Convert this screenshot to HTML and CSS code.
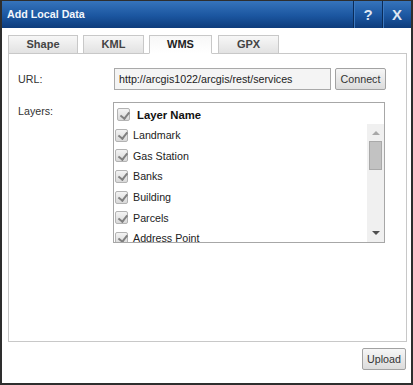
FILE: index.html
```html
<!DOCTYPE html>
<html lang="en">
<head>
    <meta charset="UTF-8">
    <title>Add Local Data</title>
    <link rel="stylesheet" href="styles.css">
</head>
<body>
    <div class="dialog">
        <div class="titlebar">
            <span class="title">Add Local Data</span>
            <span class="tb-btn">?</span>
            <span class="tb-btn">X</span>
        </div>

        <div class="dialog-body">
            <div class="tabs">
                <div class="tab tab-wide">Shape</div>
                <div class="tab">KML</div>
                <div class="tab tab-mid active">WMS</div>
                <div class="tab">GPX</div>
            </div>

            <div class="panel">
                <div class="field-row">
                    <label class="field-label">URL:</label>
                    <input class="url-input" type="text" value="http://arcgis1022/arcgis/rest/services">
                    <button class="btn connect-btn">Connect</button>
                </div>

                <div class="field-row layers-row">
                    <label class="field-label">Layers:</label>
                    <div class="layer-list">
                        <div class="layer-head"><span class="cb"></span>Layer Name</div>
                        <div class="layer-scroll">
                            <div class="layer-rows">
                                <div class="layer-row"><span class="cb"></span>Landmark</div>
                                <div class="layer-row"><span class="cb"></span>Gas Station</div>
                                <div class="layer-row"><span class="cb"></span>Banks</div>
                                <div class="layer-row"><span class="cb"></span>Building</div>
                                <div class="layer-row"><span class="cb"></span>Parcels</div>
                                <div class="layer-row"><span class="cb"></span>Address Point</div>
                            </div>
                            <div class="scrollbar">
                                <span class="arrow-up"></span>
                                <span class="thumb"></span>
                                <span class="arrow-down"></span>
                            </div>
                        </div>
                    </div>
                </div>
            </div>

            <div class="footer">
                <button class="btn upload-btn">Upload</button>
            </div>
        </div>
    </div>
</body>
</html>
```

FILE: styles.css
```css
* {
    margin: 0;
    padding: 0;
    box-sizing: border-box;
}

body {
    font-family: "Liberation Sans", Arial, sans-serif;
    font-size: 10.7px;
    color: #333;
    background: #fff;
}

.dialog {
    width: 413px;
    height: 385px;
    border: 2px solid #2e2e2e;
    border-top-width: 1px;
    background: #fff;
    display: flex;
    flex-direction: column;
}

/* title bar */
.titlebar {
    height: 27px;
    display: flex;
    align-items: stretch;
    background: linear-gradient(#3674bc, #1b56a0 55%, #0e3c7c);
    color: #fff;
}

.title {
    flex: 1;
    font-weight: bold;
    font-size: 10.7px;
    line-height: 27px;
    padding-left: 5px;
    color: #f2f6fc;
}

.tb-btn {
    width: 29px;
    border-left: 1px solid #0a2b58;
    box-shadow: inset 1px 0 0 #3d79bf;
    text-align: center;
    font-weight: bold;
    font-size: 15px;
    line-height: 27px;
    color: #dfe7f2;
}

/* body */
.dialog-body {
    flex: 1;
    padding: 7px 4px 0 6px;
    display: flex;
    flex-direction: column;
}

.tabs {
    display: flex;
    gap: 5px;
    margin-bottom: -1px;
    position: relative;
    z-index: 1;
}

.tab {
    width: 61px;
    height: 19px;
    border: 1px solid #c8c8c8;
    background: linear-gradient(#f7f7f7, #e2e2e2);
    text-align: center;
    font-weight: bold;
    font-size: 11px;
    line-height: 17px;
    color: #444;
}

.tab-wide {
    width: 70px;
}

.tab-mid {
    width: 63px;
    margin-right: 1px;
}

.tab.active {
    background: linear-gradient(#f7f7f7, #fff);
    border-bottom-color: #fff;
    color: #222;
}

.panel {
    height: 289px;
    border: 1px solid #c8c8c8;
    background: #fff;
    padding: 14px 0 0 9px;
}

.field-row {
    display: flex;
    align-items: center;
}

.field-label {
    width: 96px;
    color: #333;
}

.url-input {
    width: 217px;
    height: 22px;
    border: 1px solid #a9a9a9;
    background: #f4f4f4;
    padding: 0 4px;
    font-family: inherit;
    font-size: 10.7px;
    color: #222;
    outline: none;
}

.btn {
    height: 22px;
    border: 1px solid #a2a2a2;
    border-radius: 2px;
    background: linear-gradient(#f6f6f6, #dcdcdc);
    font-family: inherit;
    font-size: 10.7px;
    color: #333;
}

.connect-btn {
    width: 51px;
    margin-left: 4px;
}

/* layers list */
.layers-row {
    align-items: flex-start;
    margin-top: 12px;
}

.layers-row .field-label {
    padding-top: 3px;
}

.layer-list {
    width: 272px;
    height: 141px;
    margin-left: -1px;
    border: 1px solid #a7a7a7;
    background: #fff;
    display: flex;
    flex-direction: column;
    color: #222;
}

.layer-head {
    height: 21px;
    display: flex;
    align-items: center;
    gap: 7px;
    padding: 2px 0 0 3px;
    font-weight: bold;
    font-size: 11.3px;
    color: #111;
}

.layer-scroll {
    flex: 1;
    display: flex;
    overflow: hidden;
}

.layer-rows {
    flex: 1;
    padding-top: 1px;
}

.layer-row {
    height: 20.6px;
    display: flex;
    align-items: center;
    gap: 5px;
    padding-left: 1px;
    white-space: nowrap;
}

.cb {
    width: 13px;
    height: 13px;
    flex: none;
    border: 1px solid #b3b3b3;
    border-radius: 2px;
    background: linear-gradient(#f3f3f3, #d9d9d9);
    position: relative;
}

.cb::after {
    content: '';
    position: absolute;
    left: 3.5px;
    top: 0.5px;
    width: 3.5px;
    height: 7px;
    border: solid #808080;
    border-width: 0 2.5px 2.5px 0;
    transform: rotate(38deg);
}

.scrollbar {
    width: 17px;
    background: #f0f0f0;
    display: flex;
    flex-direction: column;
    align-items: center;
    padding-top: 7px;
}

.arrow-up {
    width: 0;
    height: 0;
    border-left: 4px solid transparent;
    border-right: 4px solid transparent;
    border-bottom: 4px solid #a8a8a8;
}

.thumb {
    width: 13px;
    height: 29px;
    margin-top: 6px;
    background: #c2c2c2;
    border: 1px solid #a9a9a9;
}

.arrow-down {
    width: 0;
    height: 0;
    margin-top: 61px;
    border-left: 4px solid transparent;
    border-right: 4px solid transparent;
    border-top: 4px solid #505050;
}

.footer {
    display: flex;
    justify-content: flex-end;
    padding: 6px 1px 0 0;
}

.upload-btn {
    width: 44px;
}
```
